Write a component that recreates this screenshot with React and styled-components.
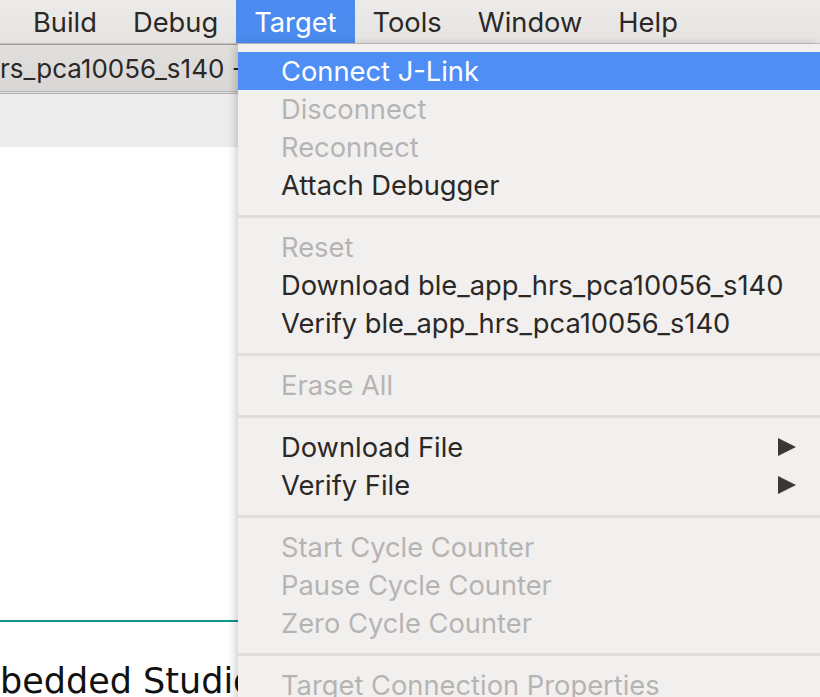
import React from 'react';
import styled, { createGlobalStyle } from 'styled-components';

const GlobalStyle = createGlobalStyle`
  html, body {
    margin: 0;
    padding: 0;
    overflow: hidden;
    background: #ffffff;
  }
`;

const Screen = styled.div`
  position: relative;
  width: 820px;
  height: 697px;
  overflow: hidden;
  font-family: Inter, "Liberation Sans", sans-serif;
  background: #ffffff;
`;

// 상단 메뉴바
const MenuBar = styled.div`
  display: flex;
  height: 44px;
  padding-left: 15px;
  background: linear-gradient(#ecebea, #e6e4e3);
  border-bottom: 1px solid #c4c2c1;
  box-sizing: border-box;
`;

const BarItem = styled.div`
  display: flex;
  align-items: center;
  padding: 1px 18px 0;
  font-size: 27.3px;
  color: ${p => (p.active ? '#ffffff' : '#2b2826')};
  background: ${p => (p.active ? '#4b8bef' : 'transparent')};
`;

const Workspace = styled.div`
  display: flex;
  flex-direction: column;
  height: 653px;
  width: 238px;
`;

const Toolbar = styled.div`
  display: flex;
  align-items: center;
  height: 50px;
  box-sizing: border-box;
  background: linear-gradient(#e2e0df, #d9d7d6);
  border-top: 1px solid #9e9c9b;
  border-bottom: 3px double #b4b2b1;
  font-size: 26px;
  color: #2b2826;
  white-space: nowrap;
  overflow: hidden;
`;

const Strip = styled.div`
  height: 53px;
  background: #ececec;
`;

const Editor = styled.div`
  flex: 1;
  display: flex;
  flex-direction: column;
  background: #ffffff;
`;

const Blank = styled.div`
  height: 473px;
`;

const Rule = styled.div`
  height: 2px;
  background: #0e9686;
`;

const Heading = styled.div`
  margin-top: 44px;
  font-family: "DejaVu Sans", Verdana, sans-serif;
  font-size: 35px;
  line-height: 30px;
  color: #111111;
  white-space: nowrap;
`;

// 드롭다운 메뉴 (다른 내용 위에 겹침)
const Dropdown = styled.div`
  position: absolute;
  left: 238px;
  top: 44px;
  width: 582px;
  height: 680px;
  padding-top: 8px;
  box-sizing: border-box;
  background: #f2f0ef;
  box-shadow: -3px 0 8px rgba(0, 0, 0, 0.18);
  display: flex;
  flex-direction: column;
`;

const Row = styled.div`
  display: flex;
  align-items: center;
  justify-content: space-between;
  height: 38px;
  flex-shrink: 0;
  padding: 0 24px 0 43px;
  font-size: 27.3px;
  white-space: nowrap;
  color: ${p => (p.selected ? '#ffffff' : p.disabled ? '#b6b4b3' : '#2b2826')};
  background: ${p => (p.selected ? '#4f8ef5' : 'transparent')};
`;

const Separator = styled.div`
  height: 24px;
  flex-shrink: 0;
  display: flex;
  align-items: center;
  &::after {
    content: '';
    flex: 1;
    height: 3px;
    background: #e0dedd;
  }
`;

const Arrow = () => (
  <svg width="18" height="18" viewBox="0 0 18 18">
    <polygon points="0,0 18,9 0,18" fill="#3a3735" />
  </svg>
);

const menu = [
  { label: 'Connect J-Link', selected: true },
  { label: 'Disconnect', disabled: true },
  { label: 'Reconnect', disabled: true },
  { label: 'Attach Debugger' },
  'sep',
  { label: 'Reset', disabled: true },
  { label: 'Download ble_app_hrs_pca10056_s140' },
  { label: 'Verify ble_app_hrs_pca10056_s140' },
  'sep',
  { label: 'Erase All', disabled: true },
  'sep',
  { label: 'Download File', sub: true },
  { label: 'Verify File', sub: true },
  'sep',
  { label: 'Start Cycle Counter', disabled: true },
  { label: 'Pause Cycle Counter', disabled: true },
  { label: 'Zero Cycle Counter', disabled: true },
  'sep',
  { label: 'Target Connection Properties', disabled: true },
];

const App = () => {
  return (
    <Screen>
      <GlobalStyle />
      <MenuBar>
        <BarItem>Build</BarItem>
        <BarItem>Debug</BarItem>
        <BarItem active>Target</BarItem>
        <BarItem>Tools</BarItem>
        <BarItem>Window</BarItem>
        <BarItem>Help</BarItem>
      </MenuBar>
      <Workspace>
        <Toolbar>rs_pca10056_s140 -</Toolbar>
        <Strip />
        <Editor>
          <Blank />
          <Rule />
          <Heading>bedded Studio</Heading>
        </Editor>
      </Workspace>
      <Dropdown>
        {menu.map((m, i) =>
          m === 'sep' ? (
            <Separator key={i} />
          ) : (
            <Row key={i} selected={m.selected} disabled={m.disabled}>
              <span>{m.label}</span>
              {m.sub && <Arrow />}
            </Row>
          )
        )}
      </Dropdown>
    </Screen>
  );
};

export default App;
